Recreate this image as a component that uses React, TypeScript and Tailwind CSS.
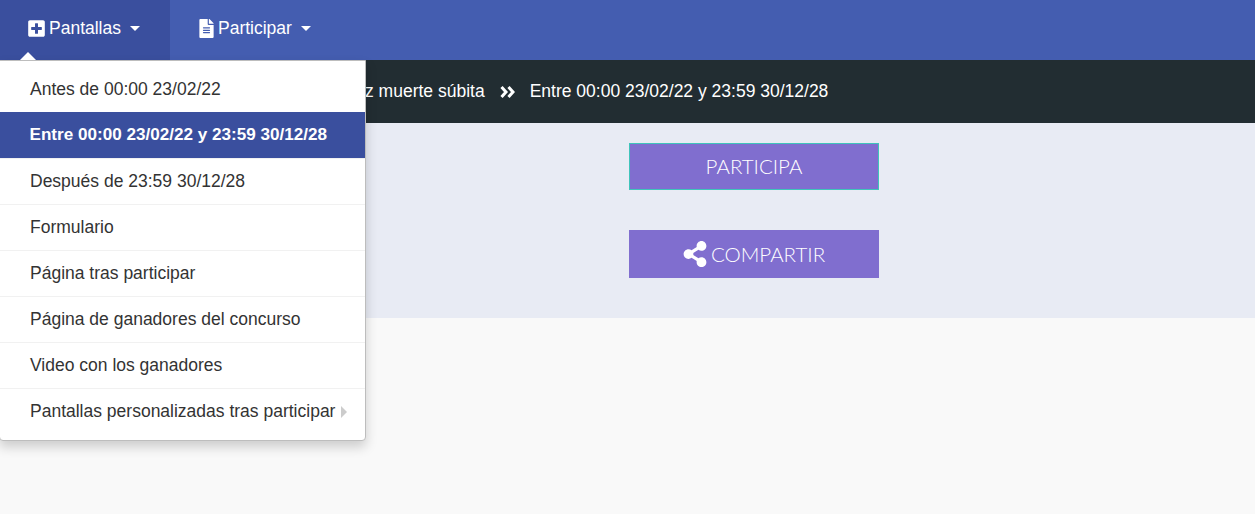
import { FaPlusSquare, FaFileAlt, FaShareAlt } from 'react-icons/fa';

const items = [
  'Antes de 00:00 23/02/22',
  'Entre 00:00 23/02/22 y 23:59 30/12/28',
  'Después de 23:59 30/12/28',
  'Formulario',
  'Página tras participar',
  'Página de ganadores del concurso',
  'Video con los ganadores',
  'Pantallas personalizadas tras participar',
];

function Caret() {
  return <span className="inline-block ml-[9px] w-0 h-0 border-x-[5px] border-x-transparent border-t-[5px] border-t-white" />;
}

function ScreensMenu() {
  return (
    <div className="absolute -left-px top-[60px] w-[367px] h-[381px] bg-white border border-[#bdbdbd] rounded-b-[4px] py-[5px] shadow-[0_6px_12px_rgba(0,0,0,0.18)] z-10">
      {items.map((item, i) => (
        <div
          key={item}
          className={
            i === 1
              ? 'h-[46px] pl-[30px] -indent-[0.5px] flex items-center bg-[#3a4f9e] text-white font-bold text-[17.1px]'
              : i === 0
                ? 'h-[46px] pl-[30px] flex items-center text-[#333333] border-t border-transparent'
                : 'h-[46px] pl-[30px] flex items-center text-[#333333] border-t border-[#f1f1f1]'
          }
        >
          {item}
          {i === 7 && <span className="ml-[6px] w-0 h-0 border-y-[6px] border-y-transparent border-l-[6px] border-l-[#cccccc]" />}
        </div>
      ))}
      {/* flecha del menú */}
      <span className="absolute left-[20px] -top-[9px] w-0 h-0 border-x-[8px] border-x-transparent border-b-[8px] border-b-white" />
    </div>
  );
}

export default function App() {
  return (
    <div className="relative min-h-[514px] bg-[#f9f9f9] font-['Liberation_Sans',Arial,sans-serif] text-[17.5px] overflow-hidden">
      <nav className="h-[60px] bg-[#445db0] flex text-white">
        <div className="w-[170px] bg-[#3a4f9e] flex items-center pl-[28px] pb-[4px]">
          <FaPlusSquare className="w-[17px] h-[19px] mr-[4px]" />
          Pantallas
          <Caret />
        </div>
        <div className="flex items-center pl-[29px] pb-[4px]">
          <FaFileAlt className="w-[15px] h-[19px] mr-[4px]" />
          Participar
          <Caret />
        </div>
      </nav>
      <ScreensMenu />
      <div className="h-[63px] bg-[#222d32] text-white flex items-center pl-[365px]">
        <span className="whitespace-nowrap">z muerte súbita</span>
        <svg viewBox="0 0 15 12" className="mx-[15px] w-[15px] h-[12px]" fill="none" stroke="currentColor" strokeWidth="3">
          <path d="M1.5 1 L6 6 L1.5 11 M8.5 1 L13 6 L8.5 11" />
        </svg>
        <span className="whitespace-nowrap">Entre 00:00 23/02/22 y 23:59 30/12/28</span>
      </div>
      <section className="h-[195px] bg-[#e8ebf4] flex flex-col items-start pt-[20px] pl-[629px] font-['Lato',sans-serif] font-light text-[20.5px] text-white">
        <button className="w-[250px] h-[47px] pb-px bg-[#806ecf] border border-[#3fc4bb] flex items-center justify-center">
          PARTICIPA
        </button>
        <button className="w-[250px] h-[48px] mt-[40px] bg-[#806ecf] flex items-center justify-center">
          <FaShareAlt className="w-[24px] h-[26px] mr-[4px]" />
          COMPARTIR
        </button>
      </section>
    </div>
  );
}
